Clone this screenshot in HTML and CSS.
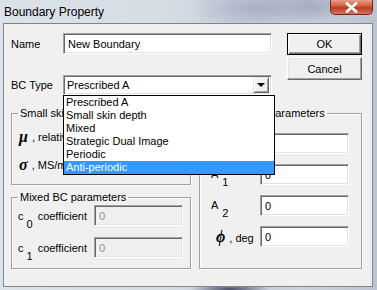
FILE: index.html
```html
<!DOCTYPE html>
<html lang="en">

<head>
    <meta charset="UTF-8">
    <title>Boundary Property</title>
    <link rel="stylesheet" href="styles.css">
</head>

<body>
    <div class="window">
        <div class="titlebar">
            <span class="title">Boundary Property</span>
            <span class="close">
                <svg width="13" height="11" viewBox="0 0 13 11">
                    <path d="M2 1.5 L11 9.5 M11 1.5 L2 9.5" stroke="#fff" stroke-width="2.8" stroke-linecap="round" />
                </svg>
            </span>
        </div>

        <div class="client">
            <div class="top">
                <div class="fields">
                    <div class="field-row">
                        <label for="bname">Name</label>
                        <input type="text" id="bname" class="edit" value="New Boundary">
                    </div>
                    <div class="field-row bc-row">
                        <label>BC Type</label>
                        <div class="combo">
                            <span class="combo-text">Prescribed A</span>
                            <span class="combo-btn"></span>
                        </div>
                    </div>
                </div>
                <div class="buttons">
                    <button class="btn btn-default">OK</button>
                    <button class="btn">Cancel</button>
                </div>
            </div>

            <div class="groups">
                <div class="col-left">
                    <fieldset class="group group-skin">
                        <legend>Small skin depth parameters</legend>
                        <div class="param"><b class="greek">μ</b>, relative permeability</div>
                        <div class="param"><b class="greek">σ</b>, MS/m</div>
                    </fieldset>
                    <fieldset class="group group-mixed">
                        <legend>Mixed BC parameters</legend>
                        <div class="param">
                            <span class="plabel">c<sub>0</sub>coefficient</span>
                            <input type="text" class="edit small" value="0" disabled>
                        </div>
                        <div class="param">
                            <span class="plabel">c<sub>1</sub>coefficient</span>
                            <input type="text" class="edit small" value="0" disabled>
                        </div>
                    </fieldset>
                </div>
                <fieldset class="group group-periodic">
                    <legend>Periodic BC parameters</legend>
                    <div class="param">
                        <span class="plabel">A<sub>0</sub></span>
                        <input type="text" class="edit small" value="0">
                    </div>
                    <div class="param">
                        <span class="plabel">A<sub>1</sub></span>
                        <input type="text" class="edit small" value="0">
                    </div>
                    <div class="param gap-more">
                        <span class="plabel">A<sub>2</sub></span>
                        <input type="text" class="edit small" value="0">
                    </div>
                    <div class="param">
                        <span class="plabel phi"><b class="greek">ϕ</b>, deg</span>
                        <input type="text" class="edit small" value="0">
                    </div>
                </fieldset>
            </div>

            <ul class="droplist">
                <li>Prescribed A</li>
                <li>Small skin depth</li>
                <li>Mixed</li>
                <li>Strategic Dual Image</li>
                <li>Periodic</li>
                <li class="selected">Anti-periodic</li>
            </ul>
        </div>
    </div>
</body>

</html>
```

FILE: styles.css
```css
body {
    margin: 0;
    font-family: "Liberation Sans", Arial, sans-serif;
    font-size: 11px;
    color: #000;
}

.window {
    width: 377px;
    height: 290px;
    box-sizing: border-box;
    display: flex;
    flex-direction: column;
    padding: 0 4px 3px 3px;
    background:
        radial-gradient(ellipse 40px 6px at 230px 289px, #4a5068, transparent),
        radial-gradient(ellipse 70px 20px at 260px 8px, #aab0c6, transparent),
        radial-gradient(ellipse 50px 18px at 310px 6px, #a4acc2, transparent),
        linear-gradient(90deg, #dce2e9 0%, #d6dce4 45%, #c5ccd8 65%, #ccd2dc 80%, #bcc4d2 100%);
}

.titlebar {
    height: 23px;
    display: flex;
    justify-content: space-between;
    align-items: flex-start;
}

.title {
    font-size: 12px;
    line-height: 14px;
    margin: 5px 0 0 1px;
}

.close {
    width: 43px;
    height: 15px;
    box-sizing: border-box;
    display: flex;
    align-items: center;
    justify-content: center;
    border: 1px solid #6e2a22;
    border-top: none;
    border-radius: 0 0 5px 5px;
    background: linear-gradient(#e8a08c, #d05a40 45%, #c03a24 55%, #d8745a);
}

.client {
    flex: 1;
    position: relative;
    border: 1px solid #7d8690;
    background: #f0f0f0;
    padding: 9px 0 0 7px;
}

.top {
    display: flex;
}

.fields {
    width: 261px;
}

.field-row {
    display: flex;
    align-items: center;
}

.field-row label {
    width: 52px;
}

.bc-row {
    margin-top: 21px;
}

.edit {
    box-sizing: border-box;
    width: 209px;
    height: 21px;
    margin: 0;
    padding: 1px 4px 0;
    font: inherit;
    background: #fff;
    border: 1px solid;
    border-color: #a0a0a0 #fff #fff #a0a0a0;
    box-shadow: inset 1px 1px 0 #696969, inset -1px -1px 0 #e3e3e3;
    outline: none;
}

.edit:disabled {
    background: #f0f0f0;
    color: #8d8d8d;
}

.edit.small {
    width: 89px;
}

.combo {
    box-sizing: border-box;
    width: 209px;
    height: 20px;
    display: flex;
    align-items: center;
    justify-content: space-between;
    padding: 2px;
    background: #fff;
    border: 1px solid;
    border-color: #a0a0a0 #fff #fff #a0a0a0;
    box-shadow: inset 1px 1px 0 #696969, inset -1px -1px 0 #e3e3e3;
}

.combo-text {
    padding-left: 1px;
}

.combo-btn {
    width: 16px;
    height: 16px;
    box-sizing: border-box;
    display: flex;
    align-items: center;
    justify-content: center;
    background: #f0f0f0;
    border: 1px solid;
    border-color: #e3e3e3 #696969 #696969 #e3e3e3;
    box-shadow: inset 1px 1px 0 #fff, inset -1px -1px 0 #a0a0a0;
}

.combo-btn::after {
    content: "";
    border-left: 4px solid transparent;
    border-right: 4px solid transparent;
    border-top: 4px solid #000;
}

.buttons {
    display: flex;
    flex-direction: column;
    gap: 2px;
    margin-left: 15px;
}

.btn {
    box-sizing: border-box;
    width: 75px;
    height: 23px;
    margin: 0;
    padding: 0;
    font: inherit;
    font-size: 11px;
    background: #f0f0f0;
    border: 1px solid;
    border-color: #fff #696969 #696969 #fff;
    box-shadow: inset -1px -1px 0 #a0a0a0, inset 1px 1px 0 #e3e3e3;
}

.btn-default {
    height: 22px;
    border: 1px solid #000;
    box-shadow: inset 1px 1px 0 #fff, inset -1px -1px 0 #696969, inset -2px -2px 0 #a0a0a0;
}

.groups {
    display: flex;
    gap: 8px;
    margin-top: 12px;
}

.col-left {
    display: flex;
    flex-direction: column;
    gap: 6px;
    width: 180px;
}

.group {
    box-sizing: border-box;
    margin: 0;
    padding: 0 5px;
    min-width: 0;
    border: 1px solid #a0a0a0;
    box-shadow: 1px 1px 0 #fff, inset 1px 1px 0 #fff;
}

.group legend {
    padding: 0 2px;
    margin-left: 1px;
    line-height: 13px;
}

.group-skin {
    height: 78px;
    padding-top: 6px;
}

.group-mixed {
    height: 78px;
    padding-top: 1px;
}

.group-periodic {
    width: 163px;
    padding-top: 13px;
}

.param {
    display: flex;
    align-items: center;
    height: 21px;
    white-space: nowrap;
}

.group-skin .param + .param {
    margin-top: 7px;
}

.group-mixed .param + .param {
    margin-top: 11px;
}

.group-periodic .param + .param {
    margin-top: 10px;
}

.group-periodic .gap-more {
    margin-top: 13px;
}

.group-mixed .plabel {
    width: 76px;
    margin-left: 1px;
    padding-top: 3px;
}

.group-periodic .plabel {
    width: 49px;
    padding-left: 6px;
}

.group-periodic .phi {
    width: 46px;
    padding-left: 9px;
}

.plabel sub {
    font-size: 11px;
    vertical-align: -8px;
    line-height: 0;
    margin: 0 5px 0 3px;
}

.group-periodic sub {
    margin: 0 0 0 4px;
}

.greek {
    font-family: "Liberation Serif", "DejaVu Serif", serif;
    font-style: italic;
    font-size: 16px;
    margin: 0 4px 0 2px;
}

.droplist {
    position: absolute;
    left: 59px;
    top: 71px;
    width: 210px;
    margin: 0;
    padding: 0;
    list-style: none;
    background: #fff;
    border: 1px solid #000;
}

.droplist li {
    height: 13px;
    line-height: 13px;
    padding-left: 2px;
}

.droplist .selected {
    background: #3399ff;
    color: #fff;
}
```
